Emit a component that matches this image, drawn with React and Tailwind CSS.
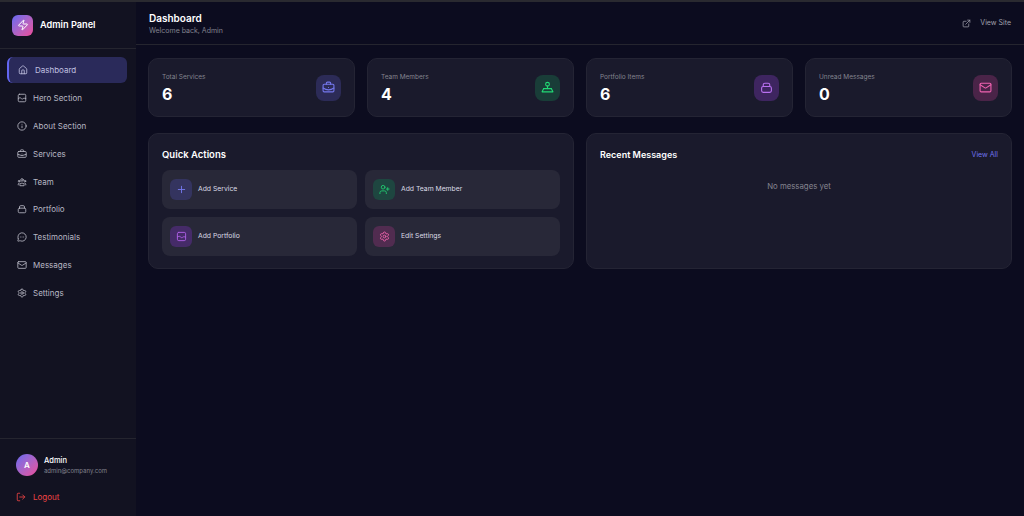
import { Zap, House, Info, BriefcaseBusiness, MessageCircleMore, Mail, Settings, LogOut, ExternalLink, Plus, UserPlus } from 'lucide-react'

function TeamIcon({ className }) {
  return (
    <svg className={className} viewBox="0 0 24 24" fill="none" stroke="currentColor" strokeWidth="2" strokeLinecap="round" strokeLinejoin="round">
      <circle cx="12" cy="7" r="3" />
      <circle cx="5" cy="10" r="2" />
      <circle cx="19" cy="10" r="2" />
      <path d="M7 20v-2a3 3 0 0 1 3-3h4a3 3 0 0 1 3 3v2z" />
      <path d="M3 19v-2a2 2 0 0 1 2-2" />
      <path d="M21 19v-2a2 2 0 0 0-2-2" />
    </svg>
  )
}

function MemberIcon({ className }) {
  return (
    <svg className={className} viewBox="0 0 24 24" fill="none" stroke="currentColor" strokeWidth="2" strokeLinecap="round" strokeLinejoin="round">
      <circle cx="12" cy="6" r="3.5" />
      <path d="M12 9.5V14" />
      <path d="M5 14h14" />
      <path d="M5 14l-3 6h20l-3-6" />
    </svg>
  )
}

function PortfolioIcon({ className }) {
  return (
    <svg className={className} viewBox="0 0 24 24" fill="none" stroke="currentColor" strokeWidth="2" strokeLinecap="round" strokeLinejoin="round">
      <rect x="3" y="10" width="18" height="11" rx="3" />
      <path d="M6 10V7a3 3 0 0 1 3-3h6a3 3 0 0 1 3 3v3" />
    </svg>
  )
}

function WaveImageIcon({ className }) {
  return (
    <svg className={className} viewBox="0 0 24 24" fill="none" stroke="currentColor" strokeWidth="2" strokeLinecap="round" strokeLinejoin="round">
      <rect x="3" y="3" width="18" height="18" rx="3" />
      <path d="M3 13c3-2 5-2 7 0s4 2 4 1 3-2 7-1" />
    </svg>
  )
}

const navItems = [
  { label: 'Dashboard', icon: House, active: true },
  { label: 'Hero Section', icon: WaveImageIcon },
  { label: 'About Section', icon: Info },
  { label: 'Services', icon: BriefcaseBusiness },
  { label: 'Team', icon: TeamIcon },
  { label: 'Portfolio', icon: PortfolioIcon },
  { label: 'Testimonials', icon: MessageCircleMore },
  { label: 'Messages', icon: Mail },
  { label: 'Settings', icon: Settings },
]

const stats = [
  { label: 'Total Services', value: 6, icon: BriefcaseBusiness, box: 'bg-[#2c2b57]', color: 'text-[#7478ee]' },
  { label: 'Team Members', value: 4, icon: MemberIcon, box: 'bg-[#193d38]', color: 'text-[#22d874]' },
  { label: 'Portfolio Items', value: 6, icon: PortfolioIcon, box: 'bg-[#3e2560]', color: 'text-[#b870f0]' },
  { label: 'Unread Messages', value: 0, icon: Mail, box: 'bg-[#4a2448]', color: 'text-[#f062b0]' },
]

const actions = [
  { label: 'Add Service', icon: Plus, box: 'bg-[#34345f]', color: 'text-[#7478ee]' },
  { label: 'Add Team Member', icon: UserPlus, box: 'bg-[#1e4640]', color: 'text-[#22c870]' },
  { label: 'Add Portfolio', icon: WaveImageIcon, box: 'bg-[#452b68]', color: 'text-[#b060e8]' },
  { label: 'Edit Settings', icon: Settings, box: 'bg-[#512c50]', color: 'text-[#e862a8]' },
]

export default function App() {
  return (
    <div className="h-[516px] w-[1024px] overflow-hidden flex flex-col bg-[#0c0c1f] font-['Inter',sans-serif]">
      <div className="h-0.5 shrink-0 bg-[#2a2a30]"></div>
      <div className="flex flex-1 min-h-0">
        {/* Sidebar */}
        <aside className="w-[136px] shrink-0 flex flex-col bg-[#121221]">
          <div className="h-[47px] shrink-0 flex items-center gap-[7px] px-3 border-b border-[#25252f]">
            <div className="w-[21px] h-[21px] rounded-md flex items-center justify-center bg-gradient-to-br from-[#6366f1] to-[#ec4899]">
              <Zap className="w-3 h-3 text-white" strokeWidth={2} />
            </div>
            <span className="text-[9.2px] font-semibold text-white">Admin Panel</span>
          </div>
          <nav className="flex-1 pt-2 pl-[7px] pr-[9px] flex flex-col gap-[1.9px]">
            {navItems.map(item => (
              <div
                key={item.label}
                className={`h-[26px] flex items-center rounded-md text-[8px] ${
                  item.active
                    ? 'gap-[7px] pl-[9px] text-[#c0c0e0] bg-[#2a2a5a] border-l-2 border-[#6366f1]'
                    : 'gap-[6px] pl-[10px] text-[#b8b8c4]'
                }`}
              >
                <item.icon className="w-[10px] h-[10px]" />
                <span>{item.label}</span>
              </div>
            ))}
          </nav>
          <div className="shrink-0 h-[78px] border-t border-[#25252f] px-4 pt-[15px]">
            <div className="flex items-center gap-[6px]">
              <div className="w-[22px] h-[22px] rounded-full flex items-center justify-center text-[8px] font-semibold text-white bg-gradient-to-br from-[#6366f1] to-[#ec4899]">A</div>
              <div>
                <div className="text-[7.5px] leading-[11px] font-medium text-white">Admin</div>
                <div className="text-[6px] leading-[10px] text-[#82828e]">admin@company.com</div>
              </div>
            </div>
            <div className="mt-[15px] flex items-center gap-[7px] text-[8px] text-[#ef4444]">
              <LogOut className="w-[10px] h-[10px]" />
              <span>Logout</span>
            </div>
          </div>
        </aside>

        {/* Main */}
        <main className="flex-1 min-w-0">
          <header className="h-[43px] flex items-center justify-between px-[13px] border-b border-[#25252f]">
            <div>
              <h1 className="text-[10px] leading-[14px] font-semibold text-white">Dashboard</h1>
              <p className="text-[7px] leading-[11px] text-[#82828e]">Welcome back, Admin</p>
            </div>
            <div className="flex items-center gap-[9px] text-[7px] text-[#a0a0ac]">
              <ExternalLink className="w-[9px] h-[9px]" />
              <span>View Site</span>
            </div>
          </header>

          <div className="px-3 pt-[13px]">
            <div className="grid grid-cols-4 gap-3">
              {stats.map(stat => (
                <div key={stat.label} className="h-[59px] rounded-[10px] bg-[#1a1a2c] border border-[#242434] pl-[13px] pr-[13px] flex items-center justify-between">
                  <div>
                    <div className="mt-[1px] text-[6.5px] leading-[10px] text-[#84848f]">{stat.label}</div>
                    <div className="mt-[2px] text-[16px] leading-[20px] font-bold text-white">{stat.value}</div>
                  </div>
                  <div className={`w-[25px] h-[26px] rounded-lg flex items-center justify-center ${stat.box}`}>
                    <stat.icon className={`w-[13px] h-[13px] ${stat.color}`} />
                  </div>
                </div>
              ))}
            </div>

            <div className="grid grid-cols-2 gap-3 mt-[16px]">
              <section className="h-[136px] rounded-[10px] bg-[#1a1a2c] border border-[#242434] px-[13px] pt-[14px]">
                <h2 className="text-[9.5px] leading-[14px] font-semibold text-white">Quick Actions</h2>
                <div className="grid grid-cols-2 gap-2 mt-[8px]">
                  {actions.map(action => (
                    <div key={action.label} className="h-[39px] rounded-lg bg-[#282838] flex items-center gap-[6px] pl-2">
                      <div className={`w-[22px] h-[21px] rounded-md flex items-center justify-center ${action.box}`}>
                        <action.icon className={`w-[11px] h-[11px] ${action.color}`} />
                      </div>
                      <span className="text-[6.8px] text-[#dcdce6]">{action.label}</span>
                    </div>
                  ))}
                </div>
              </section>

              <section className="h-[136px] rounded-[10px] bg-[#1a1a2c] border border-[#242434] px-[13px] pt-[14px]">
                <div className="flex items-center justify-between">
                  <h2 className="text-[9px] leading-[14px] font-semibold text-white">Recent Messages</h2>
                  <span className="text-[7px] text-[#7073f0]">View All</span>
                </div>
                <p className="mt-[18px] text-center text-[7.8px] leading-[12px] text-[#84848f]">No messages yet</p>
              </section>
            </div>
          </div>
        </main>
      </div>
    </div>
  )
}
